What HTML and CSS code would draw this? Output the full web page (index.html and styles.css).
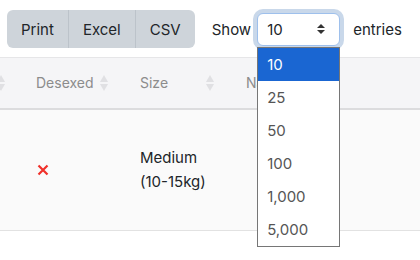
FILE: index.html
```html
<!DOCTYPE html>
<html lang="en">
  <head>
    <meta charset="UTF-8" />
    <title>Dogs</title>
    <link rel="stylesheet" href="styles.css">
  </head>
  <body>
    <div class="toolbar">
      <div class="btn-group">
        <button class="btn">Print</button>
        <button class="btn">Excel</button>
        <button class="btn">CSV</button>
      </div>
      <div class="length">
        <span>Show</span>
        <div class="select-wrap">
          <div class="select">
            <span>10</span>
            <svg class="caret" width="8" height="12" viewBox="0 0 8 12">
              <path d="M0 5 L4 1 L8 5 Z M0 7 L4 11 L8 7 Z" fill="#333"/>
            </svg>
          </div>
          <ul class="options">
            <li class="active">10</li>
            <li>25</li>
            <li>50</li>
            <li>100</li>
            <li>1,000</li>
            <li>5,000</li>
          </ul>
        </div>
        <span>entries</span>
      </div>
    </div>
    <div class="table-wrap">
      <table>
        <thead>
          <tr>
            <th class="col-cut sorting"></th>
            <th class="col-desexed sorting">Desexed</th>
            <th class="col-size sorting">Size</th>
            <th class="col-name">Name</th>
          </tr>
        </thead>
        <tbody>
          <tr>
            <td class="col-cut"></td>
            <td class="col-desexed">
              <svg class="cross" width="12" height="12" viewBox="0 0 12 12">
                <path d="M1.5 1.5 L10.5 10.5 M10.5 1.5 L1.5 10.5" stroke="#f0302a" stroke-width="2.2"/>
              </svg>
            </td>
            <td class="col-size">Medium <span class="nowrap">(10-15kg)</span></td>
            <td class="col-name"></td>
          </tr>
        </tbody>
      </table>
    </div>
  </body>
</html>
```

FILE: styles.css
```css
* {
  margin: 0;
  padding: 0;
  box-sizing: border-box;
}

body {
  font-family: Inter, "Noto Sans", sans-serif;
  color: #212529;
  background: #fff;
  width: 420px;
  height: 260px;
  overflow: hidden;
}

.toolbar {
  display: flex;
  align-items: center;
  padding: 10px 0 9px 7px;
  height: 57px;
}

.btn-group {
  display: flex;
  border-radius: 6px;
  overflow: hidden;
}

.btn {
  border: none;
  font-family: inherit;
  font-size: 15px;
  color: #212529;
  background: #ced4da;
  height: 38px;
  padding: 0 14px;
  border-left: 1px solid #bcc3ca;
}

.btn:first-child {
  border-left: none;
}

.length {
  display: flex;
  align-items: center;
  margin-left: 17px;
  font-size: 15px;
  color: #212529;
}

.select-wrap {
  position: relative;
  margin: 0 13px 0 6px;
}

.select {
  width: 83px;
  height: 33px;
  display: flex;
  align-items: center;
  justify-content: space-between;
  padding: 0 14px 0 9px;
  border: 1px solid #9ec0ec;
  border-radius: 6px;
  box-shadow: 0 0 0 4px #c9d8ea;
  background: #fff;
  font-size: 15px;
}

.options {
  position: absolute;
  top: 34px;
  left: 0;
  width: 83px;
  list-style: none;
  background: #fff;
  border: 1px solid #767676;
  z-index: 2;
}

.options li {
  height: 33px;
  line-height: 33px;
  padding-left: 9px;
  font-size: 15px;
  color: #555;
}

.options li.active {
  background: #1a66d2;
  color: #fff;
}

.table-wrap {
  overflow: hidden;
}

table {
  border-collapse: collapse;
  table-layout: fixed;
  width: 460px;
  font-size: 14px;
}

thead tr {
  height: 51px;
  background: #f5f5f7;
  border-top: 1px solid #e6e6e8;
  border-bottom: 2px solid #dcdcde;
}

th {
  position: relative;
  text-align: left;
  font-weight: 400;
  color: #8c8c8c;
  padding: 0 24px;
  white-space: nowrap;
  overflow: hidden;
}

th.sorting::before,
th.sorting::after {
  content: "";
  position: absolute;
  right: 8px;
  border-left: 4px solid transparent;
  border-right: 4px solid transparent;
}

th.sorting::before {
  top: 17px;
  border-bottom: 7px solid #e0e0e3;
}

th.sorting::after {
  top: 26px;
  border-top: 7px solid #e0e0e3;
}

th.col-cut.sorting::before,
th.col-cut.sorting::after {
  right: 7px;
}

.col-cut {
  width: 12px;
  padding: 0;
}

.col-desexed {
  width: 104px;
}

.col-size {
  width: 106px;
}

tbody tr {
  height: 122px;
  background: #fafafa;
  border-bottom: 1px solid #e2e2e2;
}

td {
  padding: 0 24px;
  vertical-align: middle;
  font-size: 15px;
  line-height: 24px;
  color: #212529;
}

td.col-cut {
  padding: 0;
}

.cross {
  display: block;
  margin-left: 1px;
}

td.col-size {
  padding-right: 10px;
}

.nowrap {
  white-space: nowrap;
}
```
